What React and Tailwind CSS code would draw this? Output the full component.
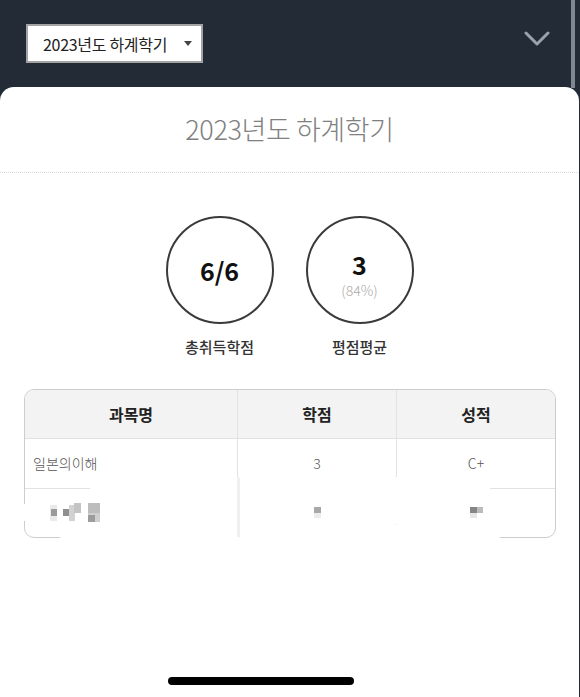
import React from 'react';

const font = { fontFamily: '"Noto Sans CJK KR", "Noto Sans", sans-serif' };

const rows = [
    { name: '일본의이해', credit: '3', grade: 'C+' },
];

const Circle = ({ children }) => (
    <div className="w-[108px] h-[108px] rounded-full border-2 border-[#3a3a3a] flex flex-col items-center justify-center">
        {children}
    </div>
);

const Mosaic = () => (
    <svg width="52" height="20" viewBox="0 0 52 20">
        <rect x="0" y="2" width="7" height="16" fill="#eaeaea" />
        <rect x="1" y="6" width="6" height="7" fill="#9a9a9a" />
        <rect x="13" y="6" width="6" height="7" fill="#8f8f8f" />
        <rect x="19" y="2" width="6" height="16" fill="#d2d2d2" />
        <rect x="24" y="0" width="7" height="10" fill="#c4c4c4" />
        <rect x="38" y="0" width="12" height="10" fill="#bdbdbd" />
        <rect x="38" y="10" width="12" height="9" fill="#cfcfcf" />
        <rect x="38" y="12" width="7" height="7" fill="#9c9c9c" />
    </svg>
);

export default function App() {
    return (
        <div className="w-[580px] h-[697px] bg-[#222b36] flex flex-col relative overflow-hidden" style={font}>
            <div className="absolute right-[5px] top-0 w-[4px] h-[88px] bg-[#7f8790]"></div>

            <div className="h-[87px] shrink-0 flex items-start justify-between pt-[24px] pl-[26px] pr-[30px]">
                <div className="w-[177px] h-[39px] bg-white border-2 border-[#a3a3a3] flex items-center pl-[15px] pr-[9px] justify-between">
                    <span className="text-[16px] text-[#222] tracking-[-0.3px]">2023년도 하계학기</span>
                    <svg width="8" height="5" viewBox="0 0 8 5"><path d="M0 0 L8 0 L4 5 Z" fill="#444" /></svg>
                </div>
                <svg className="mt-[7px]" width="26" height="16" viewBox="0 0 26 16">
                    <path d="M2 2 L13 13 L24 2" fill="none" stroke="#9aa2ab" strokeWidth="3" strokeLinecap="round" strokeLinejoin="round" />
                </svg>
            </div>

            <div className="flex-1 bg-white rounded-t-[14px] mr-[1px] flex flex-col">
                <div className="h-[86px] shrink-0 flex items-center justify-center border-b border-dotted border-[#dcdcdc]">
                    <h1 className="text-[27px] font-light text-[#808080] tracking-[-0.4px]">2023년도 하계학기</h1>
                </div>

                <div className="flex justify-center gap-[32px] pt-[43px]">
                    <div className="flex flex-col items-center">
                        <Circle>
                            <span className="text-[25px] font-bold text-[#111] leading-none">6/6</span>
                        </Circle>
                        <span className="mt-[12px] text-[15px] font-medium text-[#333]">총취득학점</span>
                    </div>
                    <div className="flex flex-col items-center">
                        <Circle>
                            <span className="text-[25px] font-bold text-[#111] leading-none mt-[8px]">3</span>
                            <span className="text-[14px] font-light text-[#aaa] leading-none mt-[6px]">(84%)</span>
                        </Circle>
                        <span className="mt-[12px] text-[15px] font-medium text-[#333]">평점평균</span>
                    </div>
                </div>

                <div className="relative mx-[24px] mt-[30px]">
                    <table className="w-[532px] border-separate border-spacing-0 border-[1.5px] border-[#cdcdcd] rounded-[10px] overflow-hidden">
                        <thead>
                            <tr className="bg-[#f3f3f3] h-[48px]">
                                <th className="w-[213px] text-[16px] font-bold text-[#222] border-r border-[#e2e2e2]">과목명</th>
                                <th className="w-[159px] text-[16px] font-bold text-[#222] border-r border-[#e2e2e2]">학점</th>
                                <th className="text-[16px] font-bold text-[#222]">성적</th>
                            </tr>
                        </thead>
                        <tbody>
                            {rows.map((r) => (
                                <tr key={r.name} className="h-[50px]">
                                    <td className="pl-[8px] text-[14px] font-light text-[#555] border-t border-r border-[#e2e2e2]">{r.name}</td>
                                    <td className="text-center text-[14px] font-light text-[#555] border-t border-r border-[#e2e2e2]">{r.credit}</td>
                                    <td className="text-center text-[14px] font-light text-[#555] border-t border-[#e2e2e2]">{r.grade}</td>
                                </tr>
                            ))}
                            <tr className="h-[49px]">
                                <td className="pl-[25px] border-t border-r border-[#e2e2e2]">
                                    <div className="relative z-10 flex"><Mosaic /></div>
                                </td>
                                <td className="border-t border-r border-[#e2e2e2]">
                                    <div className="relative z-10 flex justify-center">
                                        <svg width="7" height="11" viewBox="0 0 7 11"><rect width="7" height="6" fill="#a8a8a8" /><rect y="6" width="7" height="5" fill="#ececec" /></svg>
                                    </div>
                                </td>
                                <td className="border-t border-[#e2e2e2]">
                                    <div className="relative z-10 flex justify-center">
                                        <svg width="13" height="11" viewBox="0 0 13 11"><rect width="7" height="6" fill="#858585" /><rect x="7" width="6" height="6" fill="#bcbcbc" /><rect y="6" width="7" height="5" fill="#e6e6e6" /></svg>
                                    </div>
                                </td>
                            </tr>
                        </tbody>
                    </table>
                    {/* blur patches over the second row */}
                    <div className="absolute left-[66px] top-[88px] w-[400px] h-[47px] bg-white rounded-[10px]"></div>
                    <div className="absolute left-[36px] top-[136px] w-[440px] h-[14px] bg-white"></div>
                    <div className="absolute left-[-4px] top-[115px] w-[8px] h-[17px] bg-white"></div>
                    <div className="absolute left-[213px] top-[88px] w-[3px] h-[60px] bg-[#f0f0f0]"></div>
                </div>

                <div className="mt-auto mb-[12px] pl-[168px] flex">
                    <div className="w-[186px] h-[8px] rounded-full bg-black"></div>
                </div>
            </div>
        </div>
    );
}
